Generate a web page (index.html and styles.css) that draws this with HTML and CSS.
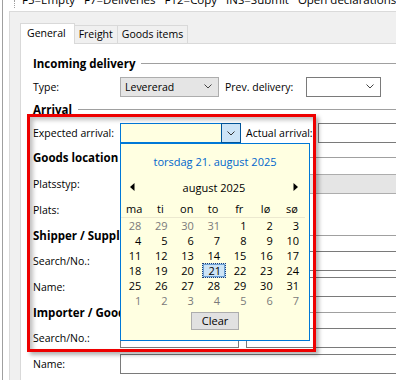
FILE: index.html
```html
<!DOCTYPE html>
<html lang="en">
<head>
    <meta charset="UTF-8">
    <title>Incoming delivery</title>
    <link rel="stylesheet" href="styles.css">
</head>
<body>
<div class="window">
    <div class="hotkeys">
        <span class="grip"></span>
        <span class="hotkeys-text">
            <span>F5=Empty</span>
            <span>F7=Deliveries</span>
            <span>F12=Copy</span>
            <span>INS=Submit</span>
            <span>Open declarations</span>
        </span>
    </div>

    <div class="frame">
        <div class="tabs">
            <div class="tab active">General</div>
            <div class="tab">Freight</div>
            <div class="tab">Goods items</div>
        </div>

        <div class="panel">
            <div class="group"><span>Incoming delivery</span></div>
            <div class="row">
                <span class="lbl">Type:</span>
                <div class="select grey w-type">Levererad
                    <svg class="chev" width="8" height="5" viewBox="0 0 8 5"><path d="M0.5 0.5 L4 4 L7.5 0.5" fill="none" stroke="#444"/></svg>
                </div>
                <span class="lbl-mid">Prev. delivery:</span>
                <div class="select w-prev">
                    <svg class="chev" width="8" height="5" viewBox="0 0 8 5"><path d="M0.5 0.5 L4 4 L7.5 0.5" fill="none" stroke="#444"/></svg>
                </div>
            </div>
            <div class="group"><span>Arrival</span></div>
            <div class="row">
                <span class="lbl">Expected arrival:</span>
                <div class="date-input">
                    <span class="date-value"></span>
                    <span class="date-btn">
                        <svg width="8" height="5" viewBox="0 0 8 5"><path d="M0.5 0.5 L4 4 L7.5 0.5" fill="none" stroke="#333"/></svg>
                    </span>
                </div>
                <span class="lbl-mid w-actual">Actual arrival:</span>
                <div class="input w-wide"></div>
            </div>
            <div class="group"><span>Goods location</span></div>
            <div class="row">
                <span class="lbl">Platsstyp:</span>
                <div class="select grey w-wide2"></div>
            </div>
            <div class="row">
                <span class="lbl">Plats:</span>
                <div class="input w-half"></div>
            </div>
            <div class="group"><span>Shipper / Supplier</span></div>
            <div class="row">
                <span class="lbl">Search/No.:</span>
                <div class="input w-half"></div>
                <div class="input w-wide gap"></div>
            </div>
            <div class="row">
                <span class="lbl">Name:</span>
                <div class="input w-wide2"></div>
            </div>
            <div class="group"><span>Importer / Goods owner</span></div>
            <div class="row">
                <span class="lbl">Search/No.:</span>
                <div class="input w-half"></div>
                <div class="input w-wide gap"></div>
            </div>
            <div class="row">
                <span class="lbl">Name:</span>
                <div class="input w-wide2"></div>
            </div>
        </div>
    </div>

    <div class="calendar">
        <div class="cal-title">torsdag 21. august 2025</div>
        <div class="cal-nav">
            <svg width="5" height="8" viewBox="0 0 5 8"><polygon points="4.5,0 0,4 4.5,8" fill="#000"/></svg>
            <span>august 2025</span>
            <svg width="5" height="8" viewBox="0 0 5 8"><polygon points="0.5,0 5,4 0.5,8" fill="#000"/></svg>
        </div>
        <div class="cal-head">
            <span>ma</span><span>ti</span><span>on</span><span>to</span><span>fr</span><span>lø</span><span>sø</span>
        </div>
        <div class="cal-grid">
            <span class="other">28</span><span class="other">29</span><span class="other">30</span><span class="other">31</span><span>1</span><span>2</span><span>3</span>
            <span>4</span><span>5</span><span>6</span><span>7</span><span>8</span><span>9</span><span>10</span>
            <span>11</span><span>12</span><span>13</span><span>14</span><span>15</span><span>16</span><span>17</span>
            <span>18</span><span>19</span><span>20</span><span class="selected">21</span><span>22</span><span>23</span><span>24</span>
            <span>25</span><span>26</span><span>27</span><span>28</span><span>29</span><span>30</span><span>31</span>
            <span class="other">1</span><span class="other">2</span><span class="other">3</span><span class="other">4</span><span class="other">5</span><span class="other">6</span><span class="other">7</span>
        </div>
        <div class="cal-foot">
            <span class="btn">Clear</span>
        </div>
    </div>

    <div class="highlight"></div>
</div>
</body>
</html>
```

FILE: styles.css
```css
body {
    margin: 0;
    background: #fff;
    overflow: hidden;
}

.window {
    position: relative;
    height: 380px;
    margin-left: 2px;
    border-left: 1px solid #a0a0a0;
    overflow: hidden;
    font-family: "Open Sans", "Liberation Sans", sans-serif;
    font-size: 10.5px;
    color: #000;
}

.hotkeys {
    display: flex;
    height: 11px;
    overflow: hidden;
}

.grip {
    width: 0;
    height: 8px;
    margin-left: 11px;
    border-left: 1px dotted #a0a0a0;
}

.hotkeys-text {
    display: flex;
    gap: 9px;
    margin-top: -7px;
    margin-left: 7px;
    line-height: 14px;
    font-size: 11.5px;
    white-space: nowrap;
}

.frame {
    margin-left: 6px;
    padding: 11px 0 0 10px;
    height: 380px;
    background: #f0f0f0;
    border-top: 1px solid #dadada;
    border-left: 1px solid #dadada;
}

.tabs {
    display: flex;
    align-items: flex-end;
    height: 20px;
}

.tab {
    box-sizing: border-box;
    height: 18px;
    line-height: 16px;
    padding: 0 4px;
    border: 1px solid #d9d9d9;
    border-bottom: none;
    border-left: none;
    background: #f0f0f0;
}

.tab.active {
    position: relative;
    height: 21px;
    margin-bottom: -1px;
    line-height: 19px;
    padding: 0 8px 0 6px;
    border-left: 1px solid #d9d9d9;
    background: #fff;
    z-index: 1;
}

.panel {
    display: grid;
    grid-template-rows: 24px 23px 23px 24px 25px 27px 25px 26px 25px 27px 25px 25px 28px;
    padding: 7px 0 0 12px;
    height: 400px;
    background: #fff;
    border-top: 1px solid #d9d9d9;
    border-left: 1px solid #d9d9d9;
}

.group {
    display: flex;
    align-items: center;
    font-weight: bold;
    font-size: 11.5px;
    white-space: nowrap;
}

.group::after {
    content: "";
    flex: 1;
    margin-left: 6px;
    border-top: 1px solid #a0a0a0;
}

.row {
    display: flex;
    align-items: center;
    white-space: nowrap;
}

.lbl {
    width: 87px;
    flex: none;
}

.lbl-mid {
    width: 81px;
    margin-left: 6px;
    flex: none;
}

.w-actual {
    width: 72px;
    margin-left: 5px;
}

.select,
.input {
    box-sizing: border-box;
    flex: none;
    display: flex;
    align-items: center;
    height: 20px;
    padding-left: 4px;
    border: 1px solid #7a7a7a;
    background: #fff;
}

.select.grey {
    background: #e5e5e5;
    border-color: #adadad;
}

.chev {
    margin-left: auto;
    margin-right: 6px;
}

.w-type { width: 99px; }
.w-prev { width: 75px; }
.w-half { width: 119px; }
.w-wide { width: 200px; }
.w-wide2 { width: 300px; }
.gap { margin-left: 7px; }

.date-input {
    box-sizing: border-box;
    display: flex;
    width: 121px;
    height: 20px;
    border: 1px solid #0078d7;
    background: #ffffe1;
}

.date-value {
    flex: 1;
}

.date-btn {
    display: flex;
    align-items: center;
    justify-content: center;
    width: 18px;
    margin: -1px -1px -1px 0;
    border: 1px solid #005499;
    background: #cce4f7;
}

/* drop-down calendar */
.calendar {
    position: absolute;
    left: 117px;
    top: 143px;
    box-sizing: border-box;
    width: 190px;
    height: 198px;
    border: 1px solid #0078d7;
    background: #ffffe1;
    z-index: 2;
}

.cal-title {
    height: 24px;
    margin-top: 6px;
    line-height: 24px;
    text-align: center;
    color: #0066cc;
    font-size: 11px;
}

.cal-nav {
    display: flex;
    align-items: center;
    justify-content: space-between;
    height: 22px;
    margin-top: 2px;
    padding: 0 11px 0 9px;
    font-size: 11px;
}

.cal-head {
    display: grid;
    grid-template-columns: repeat(7, 1fr);
    width: 184px;
    height: 17px;
    margin-top: 2px;
    line-height: 17px;
    text-align: center;
    border-bottom: 1px solid #ece9d0;
    font-size: 11px;
}

.cal-grid {
    display: grid;
    grid-template-columns: repeat(7, 1fr);
    grid-auto-rows: 15px;
    width: 184px;
    line-height: 15px;
    font-size: 11px;
    text-align: right;
}

.cal-grid span {
    padding-right: 6px;
}

.cal-grid .other {
    color: #7a7a7a;
}

.cal-grid .selected {
    box-sizing: border-box;
    margin-left: 2px;
    padding-right: 4px;
    border: 1px dotted #1d3f73;
    outline: 1px solid #6a9fd4;
    outline-offset: -2px;
    background: #cde4f6;
    line-height: 13px;
}

.cal-foot {
    display: flex;
    justify-content: center;
    margin-top: 4px;
}

.btn {
    box-sizing: border-box;
    width: 48px;
    height: 18px;
    line-height: 16px;
    text-align: center;
    border: 1px solid #adadad;
    background: #e1e1e1;
    font-size: 11px;
}

/* red annotation frame */
.highlight {
    position: absolute;
    left: 24px;
    top: 114px;
    box-sizing: border-box;
    width: 289px;
    height: 238px;
    border: 3px solid #ee0000;
    box-shadow: 3px 3px 4px rgba(0, 0, 0, 0.3), inset 3px 3px 4px rgba(0, 0, 0, 0.25);
    z-index: 3;
    pointer-events: none;
}
```
